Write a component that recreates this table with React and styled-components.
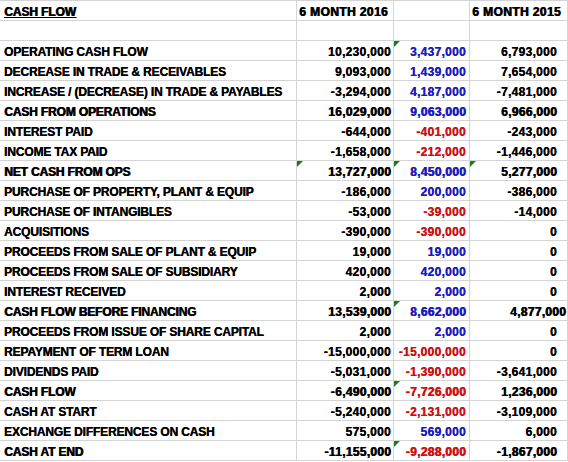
import React from 'react';
import styled, { createGlobalStyle } from 'styled-components';

const GlobalStyle = createGlobalStyle`
    body {
        margin: 0;
        background: #ffffff;
        font-family: "Liberation Sans", Arial, sans-serif;
    }
`;

const Sheet = styled.div`
    display: grid;
    grid-template-columns: 297px 97px 76px 98px;
    width: 568px;
    border-top: 1px solid #d4d4d4;
`;

const Cell = styled.div`
    position: relative;
    box-sizing: border-box;
    height: 20px;
    padding: 4px ${p => p.$padRight || 2}px 0 ${p => p.$padLeft || 2}px;
    line-height: 15px;
    font-size: 12px;
    font-weight: bold;
    white-space: nowrap;
    overflow: visible;
    text-align: ${p => p.$align || 'left'};
    color: ${p => p.$color || '#000000'};
    letter-spacing: ${p => p.$spacing || '0px'};
    text-decoration: ${p => (p.$underline ? 'underline' : 'none')};
    text-shadow: ${p => (p.$heavy ? '0.7px 0 0 currentColor' : '0.3px 0 0 currentColor')};
    border-right: 1px solid #d4d4d4;
    border-bottom: 1px solid #d4d4d4;
`;

const Flag = styled.span`
    position: absolute;
    top: 0;
    left: 0;
    width: 0;
    height: 0;
    border-top: 6px solid #1b7d1b;
    border-right: 6px solid transparent;
`;

const BLUE = '#1c1cb8';
const RED = '#cc1111';

// [label, 2016, change, 2015, heavy, flags, flush]
const rows = [
    ['OPERATING CASH FLOW', '10,230,000', '3,437,000', '6,793,000', false, [0, 1, 0]],
    ['DECREASE IN TRADE & RECEIVABLES', '9,093,000', '1,439,000', '7,654,000'],
    ['INCREASE / (DECREASE) IN TRADE & PAYABLES', '-3,294,000', '4,187,000', '-7,481,000'],
    ['CASH FROM OPERATIONS', '16,029,000', '9,063,000', '6,966,000', true],
    ['INTEREST PAID', '-644,000', '-401,000', '-243,000'],
    ['INCOME TAX PAID', '-1,658,000', '-212,000', '-1,446,000'],
    ['NET CASH FROM OPS', '13,727,000', '8,450,000', '5,277,000', true, [1, 1, 1]],
    ['PURCHASE OF PROPERTY, PLANT & EQUIP', '-186,000', '200,000', '-386,000'],
    ['PURCHASE OF INTANGIBLES', '-53,000', '-39,000', '-14,000'],
    ['ACQUISITIONS', '-390,000', '-390,000', '0'],
    ['PROCEEDS FROM SALE OF PLANT & EQUIP', '19,000', '19,000', '0'],
    ['PROCEEDS FROM SALE OF SUBSIDIARY', '420,000', '420,000', '0'],
    ['INTEREST RECEIVED', '2,000', '2,000', '0'],
    ['CASH FLOW BEFORE FINANCING', '13,539,000', '8,662,000', '4,877,000', true, [0, 1, 0], true],
    ['PROCEEDS FROM ISSUE OF SHARE CAPITAL', '2,000', '2,000', '0'],
    ['REPAYMENT OF TERM LOAN', '-15,000,000', '-15,000,000', '0'],
    ['DIVIDENDS PAID', '-5,031,000', '-1,390,000', '-3,641,000'],
    ['CASH FLOW', '-6,490,000', '-7,726,000', '1,236,000', true, [0, 1, 0]],
    ['CASH AT START', '-5,240,000', '-2,131,000', '-3,109,000'],
    ['EXCHANGE DIFFERENCES ON CASH', '575,000', '569,000', '6,000'],
    ['CASH AT END', '-11,155,000', '-9,288,000', '-1,867,000', true, [0, 1, 0]],
];

const changeColor = v => (v.startsWith('-') ? RED : BLUE);

export default function App() {
    return (
        <>
            <GlobalStyle />
            <Sheet>
                <Cell $padLeft={4} $heavy $underline $spacing="-0.1px">CASH FLOW</Cell>
                <Cell $heavy $spacing="0.4px">6 MONTH 2016</Cell>
                <Cell />
                <Cell $heavy $spacing="0.4px">6 MONTH 2015</Cell>

                <Cell />
                <Cell />
                <Cell />
                <Cell />

                {rows.map(([label, a, b, c, heavy, flags = [0, 0, 0], flush]) => (
                    <React.Fragment key={label}>
                        <Cell $padLeft={4} $heavy={heavy} $spacing="-0.15px">{label}</Cell>
                        <Cell $align="right" $padRight={2} $heavy={heavy} $spacing="0.3px">
                            {flags[0] ? <Flag /> : null}
                            {a}
                        </Cell>
                        <Cell $align="right" $padRight={3} $color={changeColor(b)} $heavy={heavy} $spacing="0.3px">
                            {flags[1] ? <Flag /> : null}
                            {b}
                        </Cell>
                        <Cell $align="right" $padRight={flush ? 1 : 10} $heavy={heavy} $spacing="0.3px">
                            {flags[2] ? <Flag /> : null}
                            {c}
                        </Cell>
                    </React.Fragment>
                ))}
            </Sheet>
        </>
    );
}
